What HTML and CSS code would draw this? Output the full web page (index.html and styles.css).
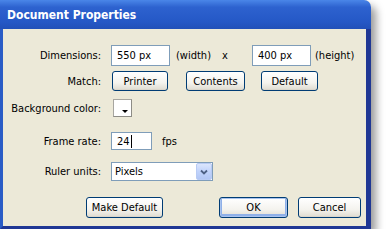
FILE: index.html
```html
<!DOCTYPE html>
<html>
<head>
  <meta charset="UTF-8">
  <title>Document Properties</title>
  <link rel="stylesheet" href="styles.css">
</head>
<body>
  <div class="window">
    <div class="titlebar">Document Properties</div>
    <div class="panel">

      <div class="row row-dim">
        <label class="lbl">Dimensions:</label>
        <div class="field w-dim">550 px</div>
        <span class="unit-width">(width)</span>
        <span class="times">x</span>
        <div class="field w-dim">400 px</div>
        <span class="unit-height">(height)</span>
      </div>

      <div class="row row-match">
        <label class="lbl">Match:</label>
        <div class="btn btn-printer">Printer</div>
        <div class="btn btn-contents">Contents</div>
        <div class="btn btn-default">Default</div>
      </div>

      <div class="row row-bg">
        <label class="lbl">Background color:</label>
        <div class="swatch"><span class="swatch-arrow"></span></div>
      </div>

      <div class="row row-rate">
        <label class="lbl">Frame rate:</label>
        <div class="field w-rate">24<span class="caret"></span></div>
        <span class="fps">fps</span>
      </div>

      <div class="row row-units">
        <label class="lbl">Ruler units:</label>
        <div class="select">
          <span class="select-text">Pixels</span>
          <span class="select-btn">
            <svg width="8" height="6" viewBox="0 0 8 6"><path d="M1 1.5 L4 4.5 L7 1.5" fill="none" stroke="#4d6185" stroke-width="1.8"/></svg>
          </span>
        </div>
      </div>

      <div class="row row-actions">
        <div class="btn btn-make">Make Default</div>
        <div class="btn btn-ok">OK</div>
        <div class="btn btn-cancel">Cancel</div>
      </div>

    </div>
  </div>
</body>
</html>
```

FILE: styles.css
```css
body {
  margin: 0;
  background-color: #ffffff;
  font-family: "DejaVu Sans Condensed", "Liberation Sans", sans-serif;
  font-size: 11px;
  color: #000;
}
.window {
  width: 371px;
  height: 229px;
  display: flex;
  flex-direction: column;
  background-color: #ece9d8;
  border-radius: 0 7px 0 0;
  box-shadow: 5px 6px 9px rgba(0, 0, 0, 0.4);
}
.titlebar {
  height: 29px;
  line-height: 30px;
  padding-left: 7px;
  color: #fff;
  font-family: "DejaVu Sans Condensed", "Liberation Sans", sans-serif;
  font-size: 12px;
  font-weight: bold;
  border-radius: 0 7px 0 0;
  background: linear-gradient(#4a86e8, #2d62cf 25%, #2558c6 75%, #2150b8);
}
.panel {
  flex: 1;
  padding-top: 16px;
  border-style: solid;
  border-width: 0 5px 3px 3px;
  border-color: #2456c0 #1f3794 #1f3794 #2a5cc6;
}
.row {
  display: flex;
  align-items: center;
}
.lbl {
  width: 98px;
  margin-right: 10px;
  text-align: right;
}
.field {
  box-sizing: border-box;
  height: 100%;
  padding-left: 5px;
  display: flex;
  align-items: center;
  background-color: #fff;
  border: 1px solid #7f9db9;
}
.w-dim { width: 59px; }
.w-rate { width: 41px; }

.row-dim { height: 21px; }
.unit-width { width: 46px; margin-left: 6px; }
.times { width: 30px; }
.unit-height { margin-left: 4px; }

.row-match { height: 20px; margin-top: 5px; }
.btn {
  box-sizing: border-box;
  height: 100%;
  display: flex;
  align-items: center;
  justify-content: center;
  border: 1px solid #003c74;
  border-radius: 3px;
  background: linear-gradient(#ffffff, #f4f3ee 60%, #e3e0d6 92%, #d6d0c5);
}
.btn-printer { width: 56px; margin-left: 1px; }
.btn-contents { width: 59px; margin-left: 18px; }
.btn-default { width: 57px; margin-left: 16px; }

.row-bg { height: 18px; margin-top: 8px; }
.swatch {
  position: relative;
  box-sizing: border-box;
  width: 19px;
  height: 18px;
  margin-left: 2px;
  background-color: #fff;
  border: 1px solid #a7a6a0;
  border-right-color: #8d8c86;
  border-bottom-color: #8d8c86;
}
.swatch-arrow {
  position: absolute;
  right: 3px;
  bottom: 3px;
  border-top: 3px solid #000;
  border-left: 3px solid transparent;
  border-right: 3px solid transparent;
}

.row-rate { height: 18px; margin-top: 15px; }
.caret {
  display: inline-block;
  width: 1px;
  height: 13px;
  margin-left: 1px;
  background-color: #000;
}
.fps { margin-left: 10px; }

.row-units { height: 19px; margin-top: 12px; }
.select {
  box-sizing: border-box;
  width: 102px;
  height: 100%;
  display: flex;
  align-items: center;
  background-color: #fff;
  border: 1px solid #7f9db9;
}
.select-text {
  flex: 1;
  padding-left: 3px;
}
.select-btn {
  box-sizing: border-box;
  width: 16px;
  height: 17px;
  display: flex;
  align-items: center;
  justify-content: center;
  border: 1px solid #b8cbf4;
  border-radius: 2px;
  background: linear-gradient(#dbe6fd, #c1d3fb 50%, #b2c7f5);
}

.row-actions { height: 21px; margin-top: 16px; }
.btn-make { width: 77px; margin-left: 83px; }
.btn-ok {
  width: 69px;
  margin-left: 56px;
  box-shadow: inset 0 0 0 1px #a9c3ee, inset 0 -1px 0 2px #8fb0e8;
}
.btn-cancel { width: 63px; margin-left: 10px; }
```
